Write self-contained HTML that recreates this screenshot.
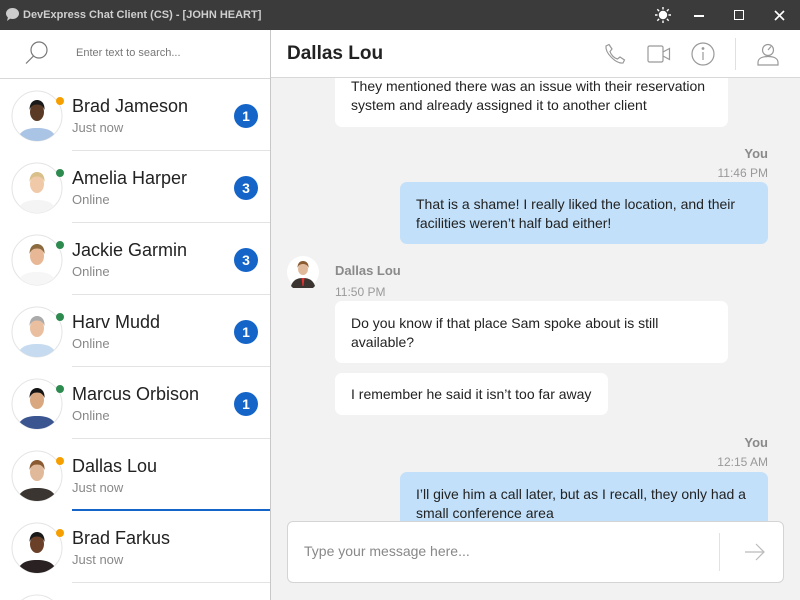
<!DOCTYPE html>
<html><head><meta charset="utf-8"><style>
*{margin:0;padding:0;box-sizing:border-box}
html,body{width:800px;height:600px;overflow:hidden}
body{font-family:"Liberation Sans",sans-serif;background:#f2f2f2;position:relative}
.abs{position:absolute}
.title{left:0;top:0;width:800px;height:30px;background:#3b3b3b;color:#cfcfcf;font-size:12px}
.left{left:0;top:30px;width:271px;height:570px;background:#fff;border-right:1px solid #c8c8c8;overflow:hidden}
.row{position:absolute;left:0;width:270px;height:72px;overflow:hidden}
.row .sep{position:absolute;left:72px;right:0;bottom:0;height:1px;background:#e3e3e3}
.row .nm{position:absolute;left:72px;top:17px;font-size:18px;color:#222}
.row .st{position:absolute;left:72px;top:41px;font-size:13px;color:#888}
.row .bd{position:absolute;left:234px;top:25px;width:24px;height:24px;border-radius:50%;background:#1565c9;color:#fff;font-size:14px;font-weight:bold;text-align:center;line-height:24px}
.row svg{position:absolute;left:11px;top:11px}
.dot{position:absolute;left:56px;top:18px;width:8px;height:8px;border-radius:50%}
.msg{position:absolute;font-size:14px;line-height:19px;color:#222;border-radius:7px;padding:8px 16px}
.in{background:#fff}.out{background:#c2e0fa}
.who{position:absolute;font-size:13px;font-weight:bold;color:#8a8a8a}
.tm{position:absolute;font-size:12px;color:#999}
</style></head><body>
<div class="msg in" style="left:335px;top:69px;width:393px;height:58px;padding-top:8px">They mentioned there was an issue with their reservation system and already assigned it to another client</div>
<div class="abs title">
<svg class="abs" style="left:5px;top:7px" width="15" height="15" viewBox="0 0 15 15"><ellipse cx="7.5" cy="6.5" rx="6.5" ry="5.5" fill="#ccc"/><path d="M3 10 L2 14 L6 11Z" fill="#ccc"/></svg>
<div class="abs" style="left:23px;top:9px;font-weight:bold;font-size:11px">DevExpress Chat Client (CS) - [JOHN HEART]</div>
<svg class="abs" style="left:655px;top:7px" width="16" height="16" viewBox="0 0 16 16" stroke="#fff" stroke-width="1.4"><circle cx="8" cy="8" r="3.5" fill="#fff"/><path d="M8 0v2.5M8 13.5V16M0 8h2.5M13.5 8H16M2.3 2.3l1.8 1.8M11.9 11.9l1.8 1.8M2.3 13.7l1.8-1.8M11.9 4.1l1.8-1.8"/></svg>
<div class="abs" style="left:694px;top:15px;width:10px;height:1.5px;background:#fff"></div>
<div class="abs" style="left:734px;top:10px;width:10px;height:10px;border:1.5px solid #fff"></div>
<svg class="abs" style="left:774px;top:10px" width="11" height="11" viewBox="0 0 11 11" stroke="#fff" stroke-width="1.6"><path d="M1 1L10 10M10 1L1 10"/></svg>
</div>
<div class="abs left">
<div class="abs" style="left:0;top:48px;width:270px;height:1px;background:#d8d8d8"></div>
<svg class="abs" style="left:25px;top:11px" width="24" height="24" viewBox="0 0 24 24" fill="none" stroke="#777" stroke-width="1.2"><circle cx="14" cy="9" r="8"/><path d="M8.5 15L1 22.5"/></svg>
<div class="abs" style="left:76px;top:17px;font-size:11px;color:#777">Enter text to search...</div>
<div id="list" class="abs" style="left:0;top:-30px;width:270px;height:600px;overflow:hidden"></div>
</div>
<div class="abs" style="left:271px;top:30px;width:529px;height:48px;background:#fff;border-bottom:1px solid #d8d8d8"></div>
<div class="abs" style="left:287px;top:43px;font-size:19px;font-weight:bold;color:#222">Dallas Lou</div>
<svg class="abs" style="left:604px;top:43px" width="22" height="22" viewBox="0 0 22 22" fill="none" stroke="#999" stroke-width="1.2"><path d="M5 1.5L8 6 6 8.5C7 12 10 15 13.5 16L16 14 20.5 17 19 20C12 21 1 10 2 3Z"/></svg>
<svg class="abs" style="left:647px;top:45px" width="24" height="18" viewBox="0 0 24 18" fill="none" stroke="#999" stroke-width="1.2"><rect x="1" y="1" width="15" height="16" rx="1.5"/><path d="M16 7L22.5 3.5V14.5L16 11"/></svg>
<svg class="abs" style="left:691px;top:42px" width="24" height="24" viewBox="0 0 24 24" fill="none" stroke="#999" stroke-width="1.2"><circle cx="12" cy="12" r="11"/><path d="M12 10v8"/><circle cx="12" cy="6.5" r=".8" fill="#999"/></svg>
<div class="abs" style="left:735px;top:38px;width:1px;height:32px;background:#e0e0e0"></div>
<svg class="abs" style="left:756px;top:42px" width="24" height="24" viewBox="0 0 24 24" fill="none" stroke="#999" stroke-width="1.2"><circle cx="12" cy="8" r="5.5"/><path d="M12 8l3-3.5"/><path d="M2 23v-2.5c0-4 4-6 10-6s10 2 10 6V23Z"/></svg>

<div class="who" style="right:32px;top:146px">You</div>
<div class="tm" style="right:32px;top:166px">11:46 PM</div>
<div class="msg out" style="left:400px;top:182px;width:368px;height:62px;padding-top:13px">That is a shame! I really liked the location, and their facilities weren’t half bad either!</div>
<svg class="abs" style="left:287px;top:256px" width="32" height="32" viewBox="0 0 32 32"><circle cx="16" cy="16" r="16" fill="#fff"/><path d="M4 30c2-6 6-8 12-8s10 2 12 8a16 16 0 0 1-24 0Z" fill="#3a3530"/><path d="M14.5 22h3l-1 8h-1z" fill="#d33"/><ellipse cx="16" cy="13" rx="5" ry="6" fill="#e0b89a"/><path d="M10.5 12c0-5 2.5-7 5.5-7s6 2 5.5 7c-1-3-3-4-5.5-4s-4.5 1-5.5 4z" fill="#8a5a30"/></svg>
<div class="who" style="left:335px;top:263px">Dallas Lou</div>
<div class="tm" style="left:335px;top:285px">11:50 PM</div>
<div class="msg in" style="left:335px;top:301px;width:393px;height:62px;padding-top:13px">Do you know if that place Sam spoke about is still available?</div>
<div class="msg in" style="left:335px;top:373px;width:273px;height:42px;padding-top:12px">I remember he said it isn’t too far away</div>
<div class="who" style="right:32px;top:435px">You</div>
<div class="tm" style="right:32px;top:455px">12:15 AM</div>
<div class="msg out" style="left:400px;top:472px;width:368px;height:49px;padding-top:13px;overflow:hidden;border-radius:7px 7px 0 0">I’ll give him a call later, but as I recall, they only had a small conference area</div>
<div class="abs" style="left:287px;top:521px;width:497px;height:62px;background:#fff;border:1px solid #d4d4d4;border-radius:6px"></div>
<div class="abs" style="left:304px;top:543px;font-size:14px;color:#888">Type your message here...</div>
<div class="abs" style="left:719px;top:533px;width:1px;height:38px;background:#e2e2e2"></div>
<svg class="abs" style="left:744px;top:541px" width="22" height="22" viewBox="0 0 22 22" fill="none" stroke="#bbb" stroke-width="1.2"><path d="M1 11H20M12 3l8 8-8 8"/></svg>

<script>
var d=[["Brad Jameson","Just now","1","#f5a000","#5a3a25","#1a1a1a","#a9c4e4"],
["Amelia Harper","Online","3","#2e8b4f","#f0c9a8","#d9c08a","#f4f4f4"],
["Jackie Garmin","Online","3","#2e8b4f","#e8b896","#8b6a40","#f6f6f6"],
["Harv Mudd","Online","1","#2e8b4f","#e9bfa0","#aaa","#c6dbf0"],
["Marcus Orbison","Online","1","#2e8b4f","#d9a880","#151515","#3a5590"],
["Dallas Lou","Just now","","#f5a000","#e0b89a","#8a5a30","#3a3530"],
["Brad Farkus","Just now","","#f5a000","#6a4028","#1a1a1a","#2a2222"],
["","","","#2e8b4f","#5a3a25","#111","#333"]];
var h="";
d.forEach(function(r,i){
var t=79+72*i;
h+='<div class="row" style="top:'+t+'px;'+(i==7?'height:17px':'')+'">'+
'<svg width="52" height="52" viewBox="0 0 52 52"><defs><clipPath id="c'+i+'"><circle cx="26" cy="26" r="25"/></clipPath></defs><circle cx="26" cy="26" r="25" fill="#fff" stroke="#e4e4e4"/><g clip-path="url(#c'+i+')"><path d="M6 52c1-10 8-14 20-14s19 4 20 14z" fill="'+r[6]+'"/><ellipse cx="26" cy="22" rx="7" ry="9" fill="'+r[4]+'"/><path d="M18.5 20c0-7 3.5-10 7.5-10s8 3 7.5 10c-1.5-4-4-5.5-7.5-5.5s-6 1.5-7.5 5.5z" fill="'+r[5]+'"/></g></svg>'+
(i<7?'<div class="dot" style="background:'+r[3]+'"></div>':'')+
(r[0]?'<div class="nm">'+r[0]+'</div><div class="st">'+r[1]+'</div>':'')+
(r[2]?'<div class="bd">'+r[2]+'</div>':'')+
(i<7?'<div class="sep" style="'+(i==5?'height:2px;background:#1565c9':'')+'"></div>':'')+
'</div>';});
document.getElementById("list").innerHTML=h;
</script>
</body></html>
